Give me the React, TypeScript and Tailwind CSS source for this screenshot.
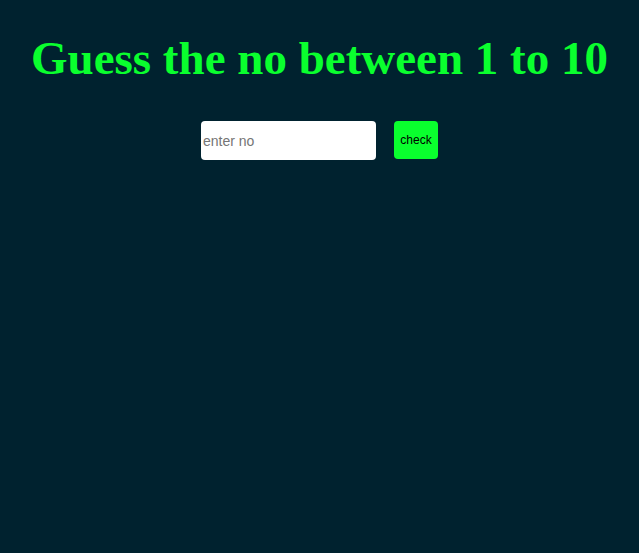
export default function App() {
  return (
    <div className="min-h-[553px] w-full bg-[#00222f] flex flex-col items-center">
      <h1 className="mt-[28px] text-[47px] leading-[60px] font-bold text-[#0aff2e] font-['Liberation_Serif',serif]">
        Guess the no between 1 to 10
      </h1>
      <div className="mt-[33px] flex items-start gap-[18px]">
        <input
          type="text"
          placeholder="enter no"
          className="w-[175px] h-[39px] rounded-[4px] bg-white px-[2px] text-[14px] text-black placeholder:text-[#757575] outline-none font-['Liberation_Sans',sans-serif]"
        />
        <button className="w-[44px] h-[38px] rounded-[4px] bg-[#0aff2e] text-[12px] text-black font-['Liberation_Sans',sans-serif]">
          check
        </button>
      </div>
    </div>
  );
}
